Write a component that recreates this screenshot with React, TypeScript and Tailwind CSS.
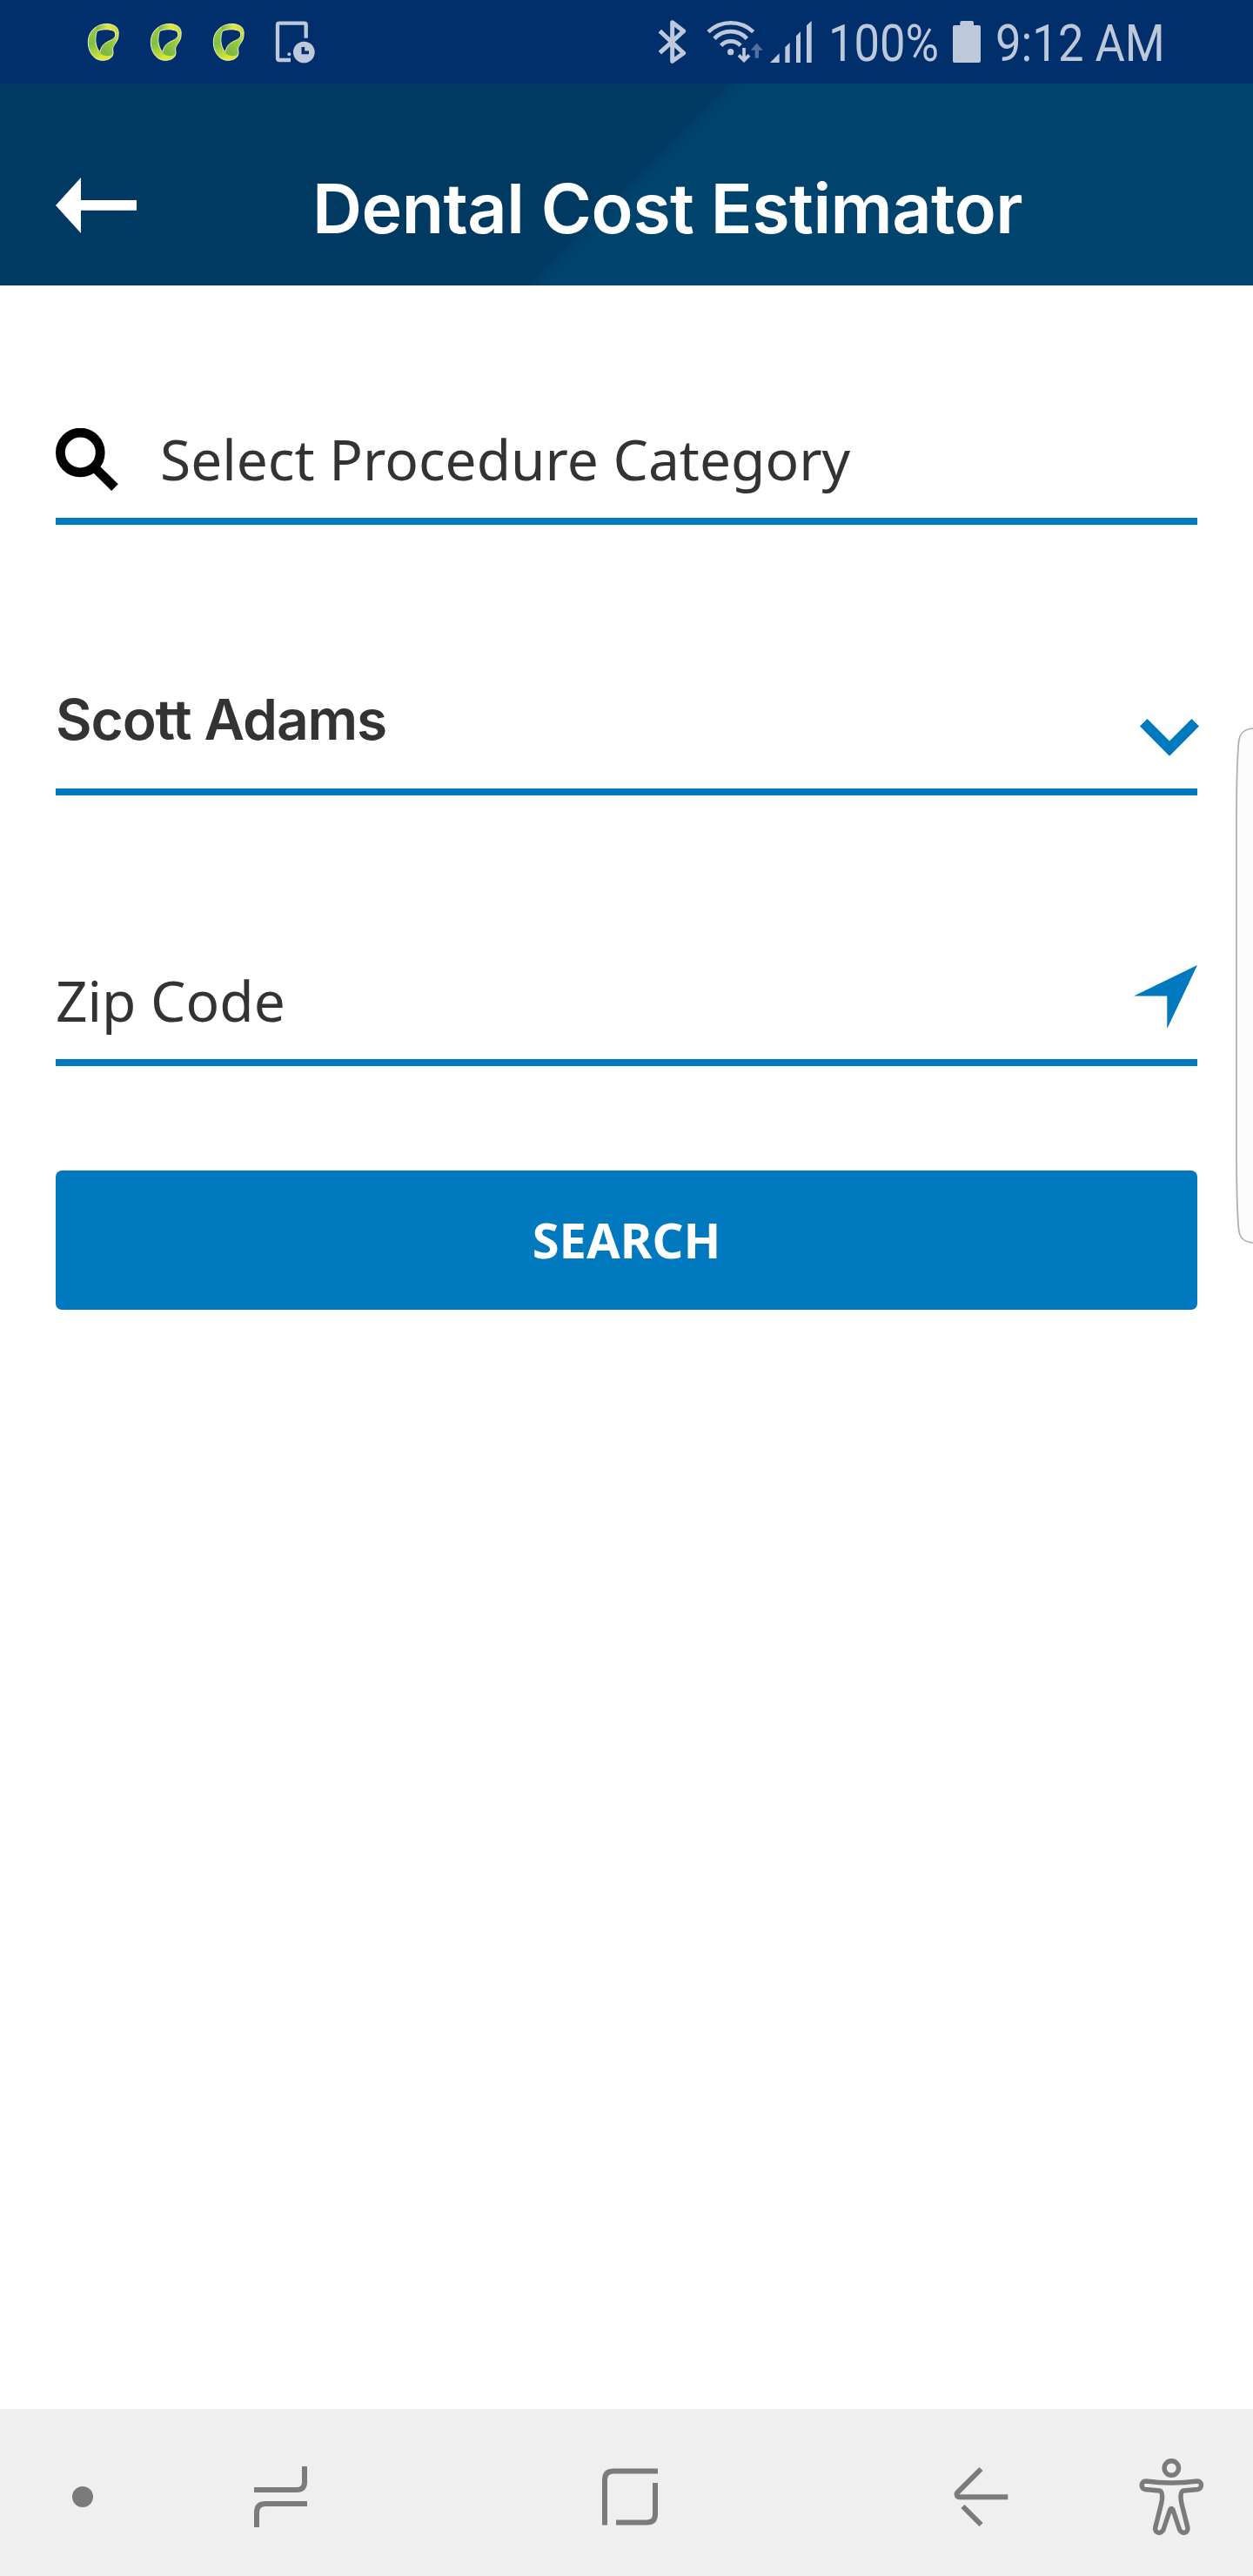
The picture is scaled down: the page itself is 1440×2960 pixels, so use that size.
import React from "react";

const TINT = "#bdc8db";

function LeafLogo({ id }: { id: string }) {
  return (
    <svg viewBox="61 66 114 156" className="h-[52px] w-[38px] shrink-0">
      <defs>
        <linearGradient id={id + "a"} x1="0" y1="0" x2="0.35" y2="1">
          <stop offset="0" stopColor="#a5cd39" />
          <stop offset="0.5" stopColor="#7dbf42" />
          <stop offset="1" stopColor="#dbe63a" />
        </linearGradient>
        <linearGradient id={id + "b"} x1="0" y1="0" x2="1" y2="0">
          <stop offset="0" stopColor="#7dbb42" />
          <stop offset="0.5" stopColor="#dfe83a" />
          <stop offset="1" stopColor="#c5db38" />
        </linearGradient>
        <linearGradient id={id + "c"} x1="1" y1="0" x2="0.4" y2="1">
          <stop offset="0" stopColor="#e0e83a" />
          <stop offset="0.5" stopColor="#97c93d" />
          <stop offset="1" stopColor="#7ab843" />
        </linearGradient>
      </defs>
      <path
        d="M96 91C72 104 64 127 65 150C67 184 88 208 114 208C136 208 152 198 151 180L140 188C126 192 112 188 106 179C94 168 89 147 91 128C92 117 94 111 97 106Z"
        fill={"url(#" + id + "a)"}
      />
      <path
        d="M96 92C110 82 136 79 151 87C165 92 170 103 169 119L158 120C159 112 156 107 147 104C130 99 112 101 97 106Z"
        fill={"url(#" + id + "b)"}
      />
      <path
        d="M158 110C167 106 170 114 169 124C168 145 148 156 150 171C152 180 151 189 140 192C124 194 107 188 107 179C109 164 115 154 128 146C142 138 154 136 158 125Z"
        fill={"url(#" + id + "c)"}
      />
      <g fill="none" stroke="#eef3d2" strokeWidth="3">
        <path d="M96 91C110 82 136 79 151 87C167 92 171 105 169 124C168 145 148 156 150 171C156 196 138 208 114 208C88 208 67 184 65 150C64 127 72 104 96 91Z" />
        <path d="M97 106C112 101 130 99 147 104C158 108 160 114 158 125C154 136 142 138 128 146C115 154 109 164 106 179C94 168 89 147 91 128C92 117 94 111 97 106Z" />
      </g>
    </svg>
  );
}

function StatusBar() {
  return (
    <div className="flex h-24 items-start bg-[#002f6c] pt-[22px] pl-[100px] font-[Roboto,sans-serif] text-[60px] leading-[56px] text-[#bdc8db]">
      <div className="flex shrink-0 gap-[34px]">
        <LeafLogo id="leaf1" />
        <LeafLogo id="leaf2" />
        <LeafLogo id="leaf3" />
      </div>
      <svg viewBox="706 66 138 156" className="ml-[34px] h-[52px] w-[46px] shrink-0">
        <path
          d="M813 131V86Q813 80 807 80H721Q715 80 715 86V201Q715 207 721 207H760"
          fill="none"
          stroke={TINT}
          strokeWidth="13"
        />
        <circle cx="755" cy="187" r="6" fill={TINT} />
        <circle cx="806" cy="180" r="37" fill={TINT} />
        <path d="M803 162V181H823" fill="none" stroke="#002f6c" strokeWidth="11" />
      </svg>

      <svg viewBox="48 66 99 156" className="ml-[394px] h-[52px] w-[33px] shrink-0">
        <path
          d="M55 107L137 183L98 211V77L137 107L55 182"
          fill="none"
          stroke={TINT}
          strokeWidth="15"
          strokeLinejoin="round"
        />
      </svg>
      <svg viewBox="216 66 198 156" className="ml-[23px] h-[52px] w-[66px] shrink-0">
        <g fill="none" stroke={TINT} strokeWidth="14">
          <path d="M222 110A112 112 0 0 1 377 110" />
          <path d="M243 133A76 76 0 0 1 355 133" />
          <path d="M266 157A45 45 0 0 1 333 157" />
        </g>
        <circle cx="299" cy="179" r="11" fill={TINT} />
        <path d="M345 165V206M327 190L345 208L363 190" fill="none" stroke={TINT} strokeWidth="11" />
        <path d="M368 173L389 149L411 173H396V200H383V173Z" fill="#526fa0" />
      </svg>
      <svg viewBox="435 66 144 156" className="ml-[7px] h-[52px] w-[48px] shrink-0" fill={TINT}>
        <path d="M435 216L467 184V216ZM487 216V163L503 147V216ZM525 216V124L540 109V216ZM561 216V88L578 72V216Z" />
      </svg>
      <div className="ml-[19px] w-[127px] shrink-0">
        <span className="inline-block origin-left scale-x-[0.875] whitespace-nowrap">100%</span>
      </div>
      <svg viewBox="165 66 96 156" className="ml-[16px] h-[52px] w-[32px] shrink-0" fill={TINT}>
        <path d="M171 87H190V78Q190 72 196 72H231Q237 72 237 78V87H255Q261 87 261 93V210Q261 216 255 216H171Q165 216 165 210V93Q165 87 171 87Z" />
      </svg>
      <div className="ml-[17px] w-[200px] shrink-0">
        <span className="inline-block origin-left scale-x-[0.877] whitespace-nowrap">9:12 AM</span>
      </div>
    </div>
  );
}

function Header() {
  return (
    <header className="flex h-[232px] items-start bg-[linear-gradient(135deg,#003a63_0,#003a63_588px,#00436d_604px,#00436d_100%)] pt-[95px] pl-16">
      <svg viewBox="0 0 93 64" className="mt-[13px] h-16 w-[93px] shrink-0" fill="#fff">
        <path d="M0 32L29 0V26H93V37.7H29V64Z" />
      </svg>
      <h1 className="ml-[202px] font-[Inter,sans-serif] text-[79px] leading-[96px] font-semibold tracking-[-0.5px] whitespace-nowrap text-white">
        Dental Cost Estimator
      </h1>
    </header>
  );
}

function NavBar() {
  return (
    <nav className="flex h-48 shrink-0 items-center bg-[#efefef] pt-[10px] pl-[83px]">
      <div className="h-6 w-6 shrink-0 rounded-full bg-[#7b7b7b]" />
      <svg viewBox="290 2829 66 80" className="ml-[183px] h-20 w-[66px] shrink-0" fill="none" stroke="#7b7b7b" strokeWidth="6">
        <path d="M292 2861H341Q350 2861 350 2852V2834M353 2877H305Q295 2877 295 2887V2904" />
      </svg>
      <svg viewBox="690 2829 70 80" className="ml-[334px] h-20 w-[70px] shrink-0" fill="none" stroke="#7b7b7b" strokeWidth="6">
        <path d="M756 2839.500H705Q695 2839.500 695 2849.500V2901.500M753 2853V2889Q753 2898.500 743.500 2898.500H708" />
      </svg>
      <svg viewBox="1094 2829 68 80" className="ml-[334px] h-20 w-[68px] shrink-0" fill="none" stroke="#7b7b7b" strokeWidth="6">
        <path d="M1127.500 2837L1100.800 2863.700C1098.500 2866 1099.800 2869.200 1103 2869.200H1158.300M1106.500 2880L1127.500 2901" />
      </svg>
      <svg viewBox="1306 2821 80 96" className="ml-[144px] h-24 w-20 shrink-0" fill="none" stroke="#7b7b7b" strokeWidth="5.400">
        <circle cx="1346.300" cy="2836" r="8.200" />
        <path
          strokeLinejoin="round"
          d="M1317 2851Q1332 2852.800 1346.300 2853Q1361 2852.800 1376 2851C1381.700 2850.800 1382 2859.800 1376.500 2860.500L1360 2862Q1357.500 2862.300 1357 2868Q1356.800 2872 1358 2877L1364.900 2904.500C1366 2910.800 1358 2912.500 1355.500 2906.500L1348.200 2884.500Q1346.300 2880.500 1344.400 2884.500L1337.100 2906.500C1334.600 2912.500 1326.600 2910.800 1327.700 2904.500L1334.600 2877Q1335.800 2872 1335.600 2868Q1335.100 2862.300 1332.600 2862L1316.100 2860.500C1310.600 2859.800 1310.900 2850.800 1317 2851Z"
        />
      </svg>
    </nav>
  );
}

export default function App() {
  return (
    <div className="relative flex h-[2960px] w-[1440px] flex-col overflow-hidden bg-white">
      <StatusBar />
      <Header />
      <main className="flex grow flex-col px-16 pt-[131px] font-['Noto_Sans',sans-serif] text-[64px] leading-[88px] text-[#333333]">
        <div className="flex h-[144px] items-center border-b-8 border-[#0079be] pt-[2px]">
          <svg viewBox="64 492 72 72" className="h-[72px] w-[72px] shrink-0" fill="none" stroke="#000">
            <circle cx="92.300" cy="520" r="22.900" strokeWidth="10.800" />
            <path d="M108 536.500L132 560.200" strokeWidth="10.800" />
          </svg>
          <span className="ml-12 whitespace-nowrap">Select Procedure Category</span>
        </div>

        <div className="mt-[144px] flex h-[167px] items-center justify-between border-b-8 border-[#0079be] pt-px">
          <span className="font-[Inter,sans-serif] font-semibold tracking-[-1.1px] whitespace-nowrap">Scott Adams</span>
          <svg viewBox="0 0 68 43" className="mt-[41px] -mr-[2px] h-[43px] w-[68px]" fill="#0079be">
            <path d="M8.500 0L34 25.500L59.500 0L68 8.500L34 42.700L0 8.500Z" />
          </svg>
        </div>

        <div className="mt-[167px] flex h-[144px] items-center justify-between border-b-8 border-[#0079be] pt-px">
          <span className="whitespace-nowrap">Zip Code</span>
          <svg viewBox="0 0 73 73" className="mb-2 h-[73px] w-[73px]" fill="#0079be">
            <path d="M73 0L0 35.500H38.300V73Z" />
          </svg>
        </div>

        <button className="mt-[120px] h-40 w-full rounded-[7px] bg-[#0079be] pb-[2px] text-[56px] leading-[80px] font-bold text-white">
          SEARCH
        </button>
      </main>
      <NavBar />

      <svg viewBox="1418 834 22 598" className="absolute top-[834px] right-0 h-[598px] w-[22px]">
        <path
          d="M1442 837C1430 837 1424.500 842 1423.500 853Q1421 880 1421 950V1316Q1421 1386 1423.500 1412C1424.500 1423 1430 1428 1442 1428"
          fill="#fcfcfc"
          stroke="#b0b0b0"
          strokeWidth="1.800"
        />
      </svg>
    </div>
  );
}
